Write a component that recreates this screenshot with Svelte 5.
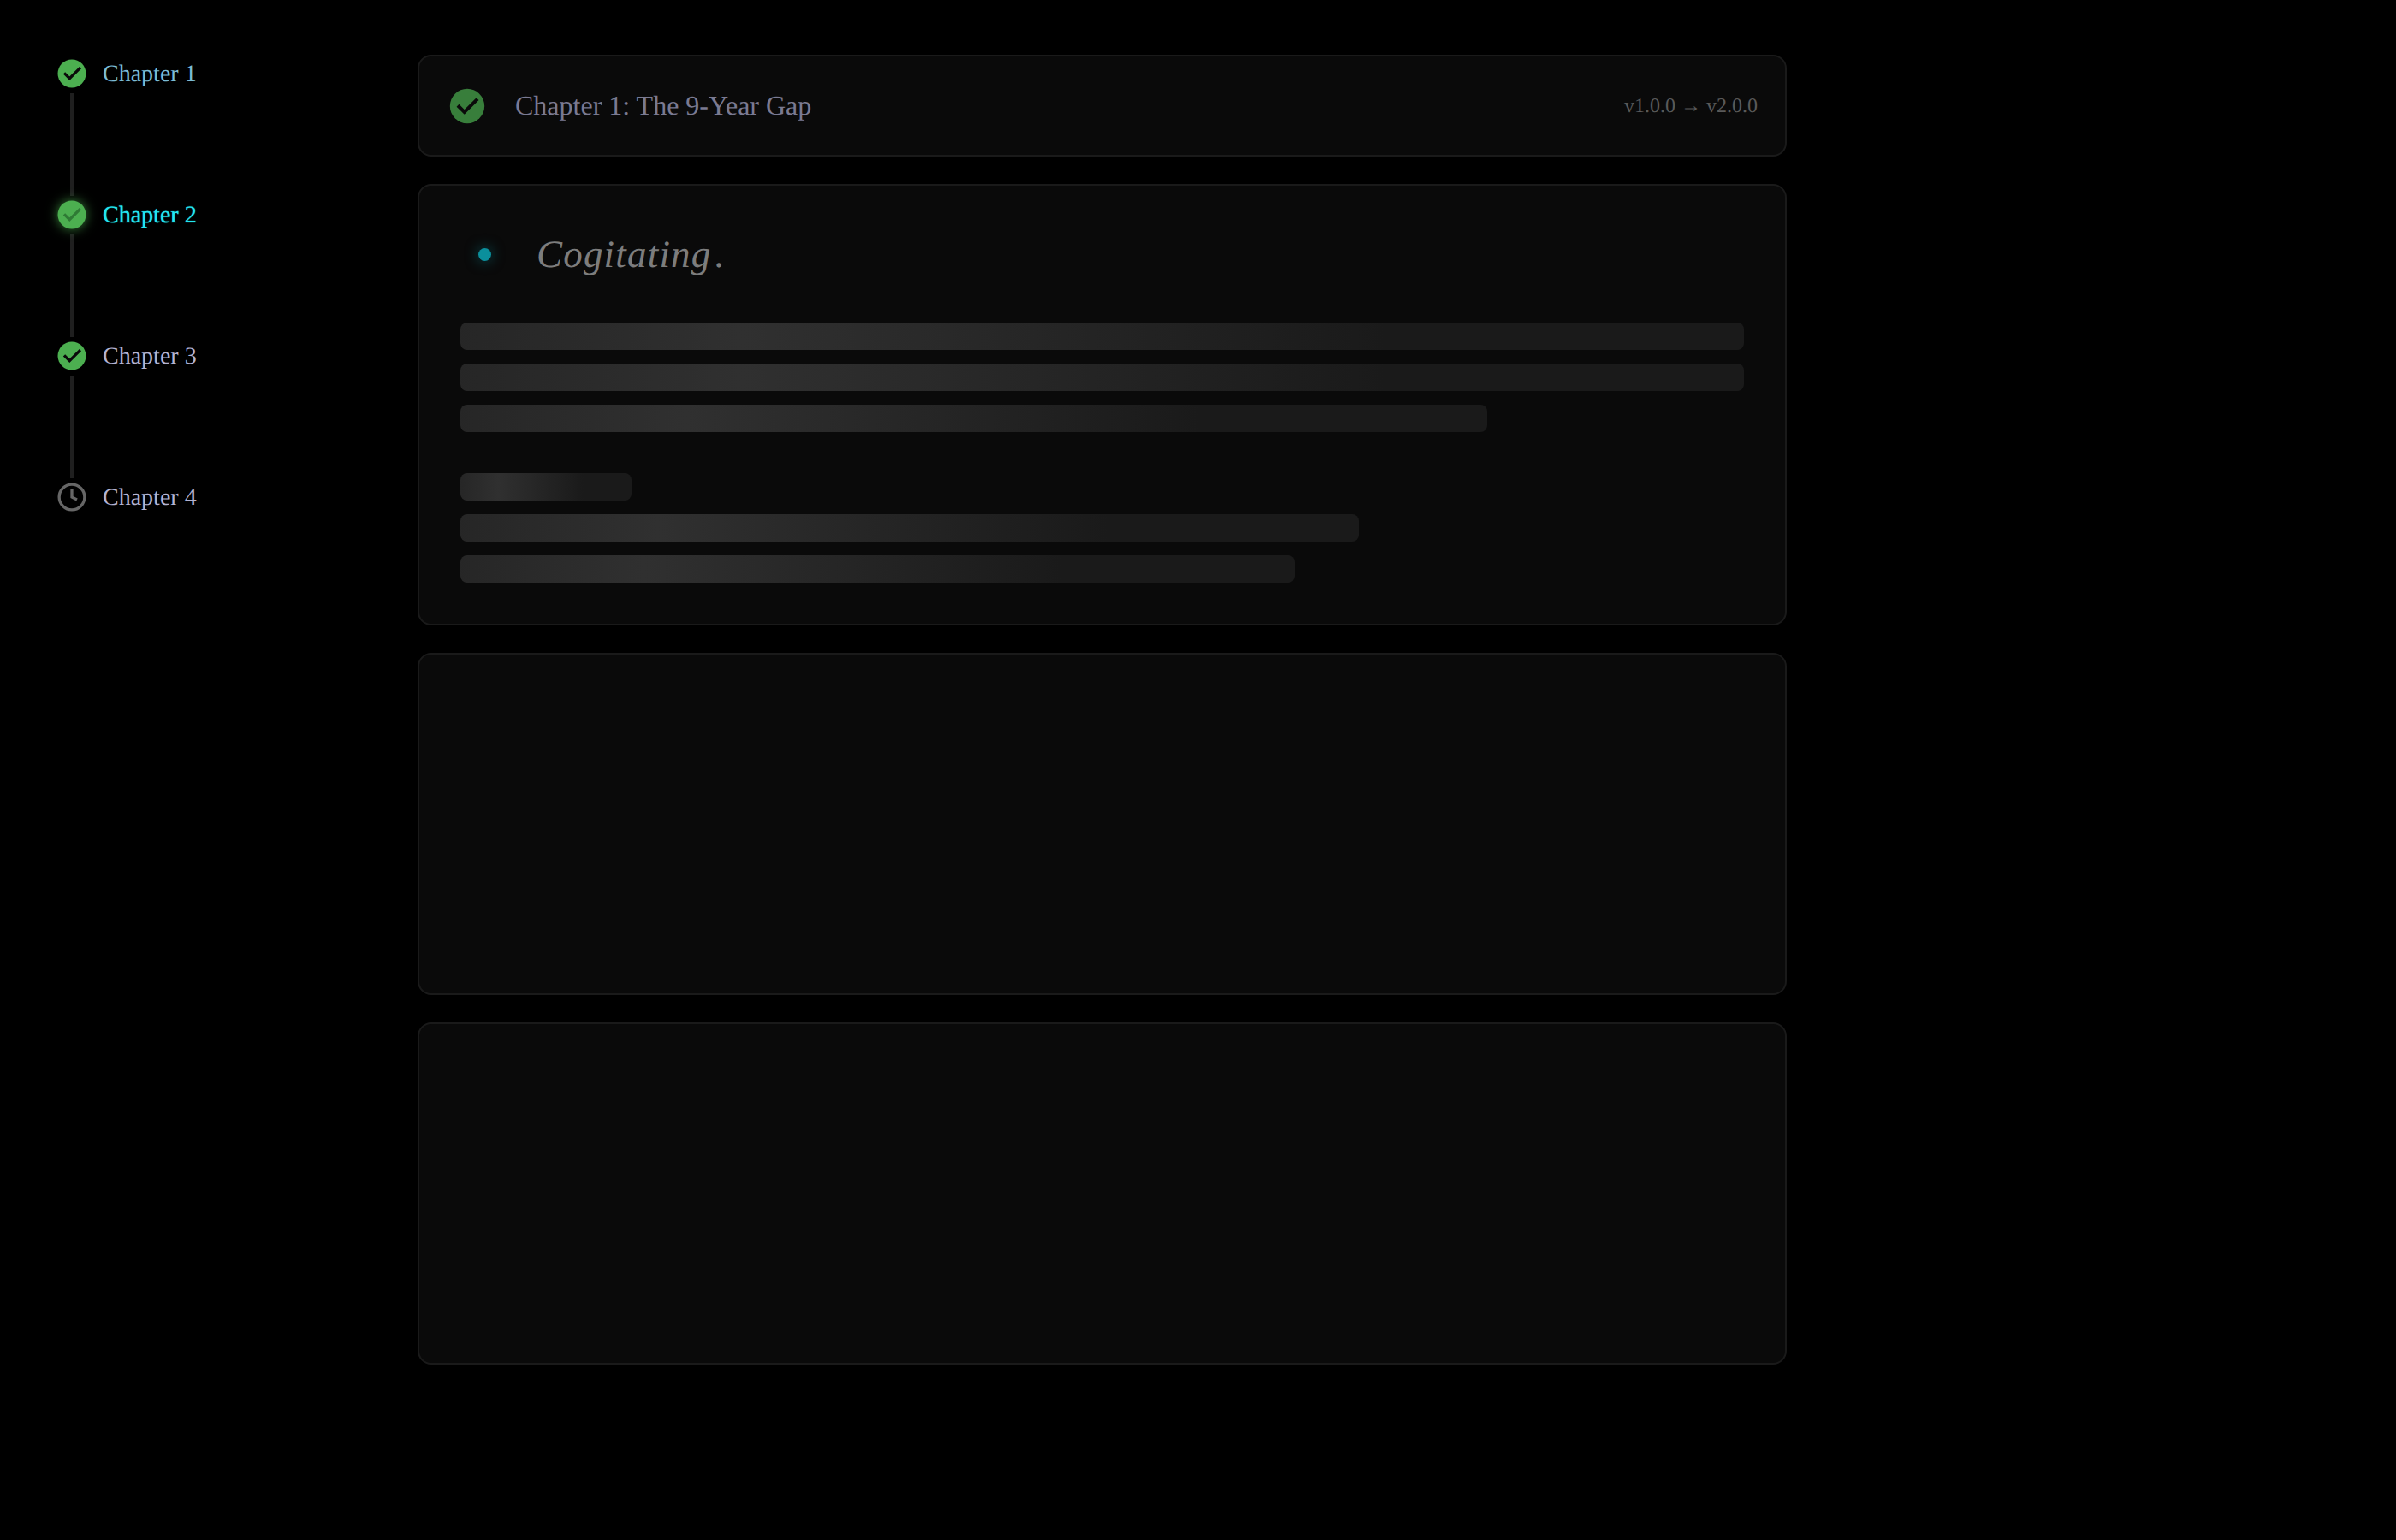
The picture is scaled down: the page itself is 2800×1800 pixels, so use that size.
<script>
  const chapters = [
    { name: 'Chapter 1', tone: 'visited', state: 'done' },
    { name: 'Chapter 2', tone: 'active', state: 'done' },
    { name: 'Chapter 3', tone: 'plain', state: 'done' },
    { name: 'Chapter 4', tone: 'plain', state: 'pending' }
  ];
  const groups = [
    ['w100', 'w100', 'w80'],
    ['w200', 'w70', 'w65']
  ];
</script>

<div class="page">
  <nav class="sidebar">
    {#each chapters as ch, i}
      <div class="step {ch.tone}">
        {#if ch.state === 'done'}
          <svg class="icon" viewBox="0 0 24 24" aria-hidden="true">
            <circle class="disc" cx="12" cy="12" r="11" />
            <path class="tick" d="M6 11.6 10.2 15.8 18.6 7.4" />
          </svg>
        {:else}
          <svg class="icon" viewBox="0 0 24 24" aria-hidden="true">
            <circle class="ring" cx="12" cy="12" r="9.9" />
            <path class="hands" d="M12 6v6l4 2" />
          </svg>
        {/if}
        <span class="label">{ch.name}</span>
      </div>
      {#if i < chapters.length - 1}
        <div class="connector"></div>
      {/if}
    {/each}
  </nav>

  <main class="content">
    <section class="card head">
      <div class="head-left">
        <svg class="head-icon" viewBox="0 0 24 24" aria-hidden="true">
          <circle class="disc" cx="12" cy="12" r="11" />
          <path class="tick" d="M6 11.6 10.2 15.8 18.6 7.4" />
        </svg>
        <span class="title">Chapter 1: The 9-Year Gap</span>
      </div>
      <span class="version">v1.0.0 → v2.0.0</span>
    </section>

    <section class="card body">
      <div class="status">
        <span class="dot"></span>
        <span class="cog">Cogitating<span class="ellipsis">.</span></span>
      </div>
      <div class="groups">
        {#each groups as group}
          <div class="group">
            {#each group as w}
              <div class="bar {w}"></div>
            {/each}
          </div>
        {/each}
      </div>
    </section>

    <section class="card empty"></section>
    <section class="card empty"></section>
  </main>
</div>

<style>
  :global(body) {
    margin: 0;
    background: #000;
  }
  .page {
    display: flex;
    min-height: 1800px;
    background: #000;
    font-family: "Liberation Serif", "Times New Roman", serif;
    text-rendering: geometricPrecision;
  }
  .sidebar {
    width: 422px;
    margin-left: 66px;
    padding-top: 67.5px;
    box-sizing: border-box;
  }
  .step {
    display: flex;
    align-items: center;
    gap: 18px;
    height: 36px;
  }
  .icon {
    width: 36px;
    height: 36px;
    flex: none;
    overflow: visible;
  }
  .disc { fill: #4caf50; }
  .tick {
    fill: none;
    stroke: #0a0a0a;
    stroke-width: 2.2;
    stroke-linecap: butt;
    stroke-linejoin: miter;
  }
  .ring, .hands {
    fill: none;
    stroke: #666;
    stroke-width: 2.2;
  }
  .label {
    font-size: 28px;
    line-height: 36px;
    padding-top: 2px;
    color: #b4b4d2;
  }
  .visited .label { color: #7bbcd6; }
  .active .label {
    color: #22e6f0;
    text-shadow: 0 0 1px #22e6f0;
  }
  .active .icon { filter: drop-shadow(0 0 7px rgba(76, 175, 80, 0.75)); }
  .active .tick { stroke: #2f7a35; }
  .connector {
    width: 4px;
    height: 120px;
    margin: 5.5px 0 3.5px 16px;
    background: #1f1f1f;
  }
  .content {
    width: 1600px;
    padding-top: 64px;
    display: flex;
    flex-direction: column;
    gap: 32px;
  }
  .card {
    box-sizing: border-box;
    background: #0a0a0a;
    border: 2px solid #1a1a1a;
    border-radius: 16px;
  }
  .head {
    height: 119px;
    padding: 0 32px 0 34px;
    display: flex;
    align-items: center;
    justify-content: space-between;
  }
  .head-left {
    display: flex;
    align-items: center;
    gap: 34px;
  }
  .head-icon {
    width: 44px;
    height: 44px;
    flex: none;
    opacity: 0.7;
  }
  .title {
    font-size: 32px;
    color: #7a7a92;
  }
  .version {
    font-size: 24px;
    padding-top: 2px;
    color: #5a5a5a;
  }
  .body {
    padding: 48px;
    display: flex;
    flex-direction: column;
    gap: 48px;
  }
  .status {
    height: 64px;
    display: flex;
    align-items: center;
    padding-left: 21px;
    gap: 53px;
  }
  .dot {
    width: 15px;
    height: 15px;
    border-radius: 50%;
    background: #0b8f9c;
    box-shadow: 0 0 16px rgba(11, 143, 156, 0.55);
    flex: none;
  }
  .cog {
    font-size: 45px;
    font-style: italic;
    letter-spacing: 1.2px;
    line-height: 60px;
    color: #7d7d7d;
  }
  .ellipsis { margin-left: 4px; }
  .groups {
    display: flex;
    flex-direction: column;
    gap: 48px;
  }
  .group {
    display: flex;
    flex-direction: column;
    gap: 16px;
  }
  .bar {
    height: 32px;
    border-radius: 8px;
    background: linear-gradient(90deg, #1a1a1a 25%, #303030 50%, #1a1a1a 75%);
    background-size: 200% 100%;
    background-position: 78% 0;
  }
  .w100 { width: 100%; }
  .w80 { width: 80%; }
  .w70 { width: 70%; }
  .w65 { width: 65%; }
  .w200 { width: 200px; }
  .empty { height: 400px; }
</style>
